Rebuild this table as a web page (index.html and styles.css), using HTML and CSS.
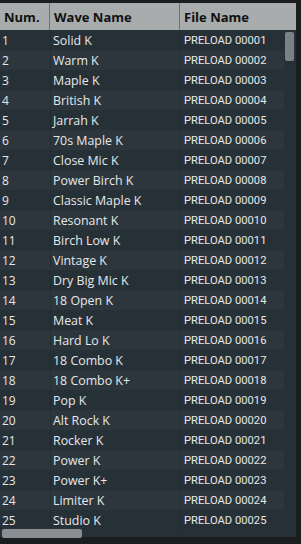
FILE: index.html
```html
<!DOCTYPE html>
<html>
<head>
<meta charset="utf-8">
<link rel="stylesheet" href="styles.css">
</head>
<body>
<div class="frame">
  <div class="header">
    <div class="hcell">Num.</div>
    <div class="hcell">Wave Name</div>
    <div class="hcell last">File Name</div>
  </div>
  <div class="body">
    <div class="rows" id="rows">
      <div class="row"><span class="c num">1</span><span class="c name">Solid K</span><span class="c file">PRELOAD 00001</span></div>
      <div class="row"><span class="c num">2</span><span class="c name">Warm K</span><span class="c file">PRELOAD 00002</span></div>
      <div class="row"><span class="c num">3</span><span class="c name">Maple K</span><span class="c file">PRELOAD 00003</span></div>
      <div class="row"><span class="c num">4</span><span class="c name">British K</span><span class="c file">PRELOAD 00004</span></div>
      <div class="row"><span class="c num">5</span><span class="c name">Jarrah K</span><span class="c file">PRELOAD 00005</span></div>
      <div class="row"><span class="c num">6</span><span class="c name">70s Maple K</span><span class="c file">PRELOAD 00006</span></div>
      <div class="row"><span class="c num">7</span><span class="c name">Close Mic K</span><span class="c file">PRELOAD 00007</span></div>
      <div class="row"><span class="c num">8</span><span class="c name">Power Birch K</span><span class="c file">PRELOAD 00008</span></div>
      <div class="row"><span class="c num">9</span><span class="c name">Classic Maple K</span><span class="c file">PRELOAD 00009</span></div>
      <div class="row"><span class="c num">10</span><span class="c name">Resonant K</span><span class="c file">PRELOAD 00010</span></div>
      <div class="row"><span class="c num">11</span><span class="c name">Birch Low K</span><span class="c file">PRELOAD 00011</span></div>
      <div class="row"><span class="c num">12</span><span class="c name">Vintage K</span><span class="c file">PRELOAD 00012</span></div>
      <div class="row"><span class="c num">13</span><span class="c name">Dry Big Mic K</span><span class="c file">PRELOAD 00013</span></div>
      <div class="row"><span class="c num">14</span><span class="c name">18 Open K</span><span class="c file">PRELOAD 00014</span></div>
      <div class="row"><span class="c num">15</span><span class="c name">Meat K</span><span class="c file">PRELOAD 00015</span></div>
      <div class="row"><span class="c num">16</span><span class="c name">Hard Lo K</span><span class="c file">PRELOAD 00016</span></div>
      <div class="row"><span class="c num">17</span><span class="c name">18 Combo K</span><span class="c file">PRELOAD 00017</span></div>
      <div class="row"><span class="c num">18</span><span class="c name">18 Combo K+</span><span class="c file">PRELOAD 00018</span></div>
      <div class="row"><span class="c num">19</span><span class="c name">Pop K</span><span class="c file">PRELOAD 00019</span></div>
      <div class="row"><span class="c num">20</span><span class="c name">Alt Rock K</span><span class="c file">PRELOAD 00020</span></div>
      <div class="row"><span class="c num">21</span><span class="c name">Rocker K</span><span class="c file">PRELOAD 00021</span></div>
      <div class="row"><span class="c num">22</span><span class="c name">Power K</span><span class="c file">PRELOAD 00022</span></div>
      <div class="row"><span class="c num">23</span><span class="c name">Power K+</span><span class="c file">PRELOAD 00023</span></div>
      <div class="row"><span class="c num">24</span><span class="c name">Limiter K</span><span class="c file">PRELOAD 00024</span></div>
      <div class="row"><span class="c num">25</span><span class="c name">Studio K</span><span class="c file">PRELOAD 00025</span></div>
    </div>
    <div class="vtrack"><div class="vthumb"></div></div>
    <div class="hthumb"></div>
  </div>
</div>
</body>
</html>
```
FILE: styles.css
```css
html, body {
  margin: 0;
  padding: 0;
  background: #1c1d1f;
  width: 301px;
  height: 544px;
  overflow: hidden;
}
.frame {
  padding-top: 3px;
  width: 296px;
  font-family: "Open Sans", "Noto Sans", sans-serif;
}
.header {
  display: grid;
  grid-template-columns: 50px 130px 116px;
  height: 27px;
  background: #a8acad;
}
.hcell {
  box-sizing: border-box;
  border-right: 1px solid #6e7274;
  font-weight: 700;
  font-size: 13px;
  color: #111;
  line-height: 28px;
  padding-left: 4px;
}
.hcell.last {
  border-right: none;
}
.body {
  position: relative;
  display: flex;
  background: #263037;
  height: 507px;
}
.rows {
  width: 284px;
}
.row {
  display: grid;
  grid-template-columns: 50px 130px 104px;
  height: 20px;
  line-height: 22px;
  color: #e6e8e9;
}
.row:nth-child(even) {
  background: #2c363c;
}
.c {
  box-sizing: border-box;
  white-space: nowrap;
  overflow: hidden;
}
.num {
  font-size: 12px;
  padding-left: 2px;
}
.name {
  font-size: 12.4px;
  padding-left: 2px;
  border-left: 1px solid rgba(0, 0, 0, 0.12);
}
.file {
  font-family: Roboto, "Open Sans", sans-serif;
  font-size: 11.2px;
  padding-left: 3px;
  border-left: 1px solid rgba(0, 0, 0, 0.12);
}
.vtrack {
  width: 12px;
  background: #263037;
  position: relative;
}
.vthumb {
  position: absolute;
  left: 1px;
  top: 2px;
  width: 9px;
  height: 29px;
  border-radius: 2px;
  background: #7c8184;
}
.hthumb {
  position: absolute;
  left: 2px;
  top: 499px;
  width: 80px;
  height: 9px;
  border-radius: 2px;
  background: #8a8e90;
}
```
